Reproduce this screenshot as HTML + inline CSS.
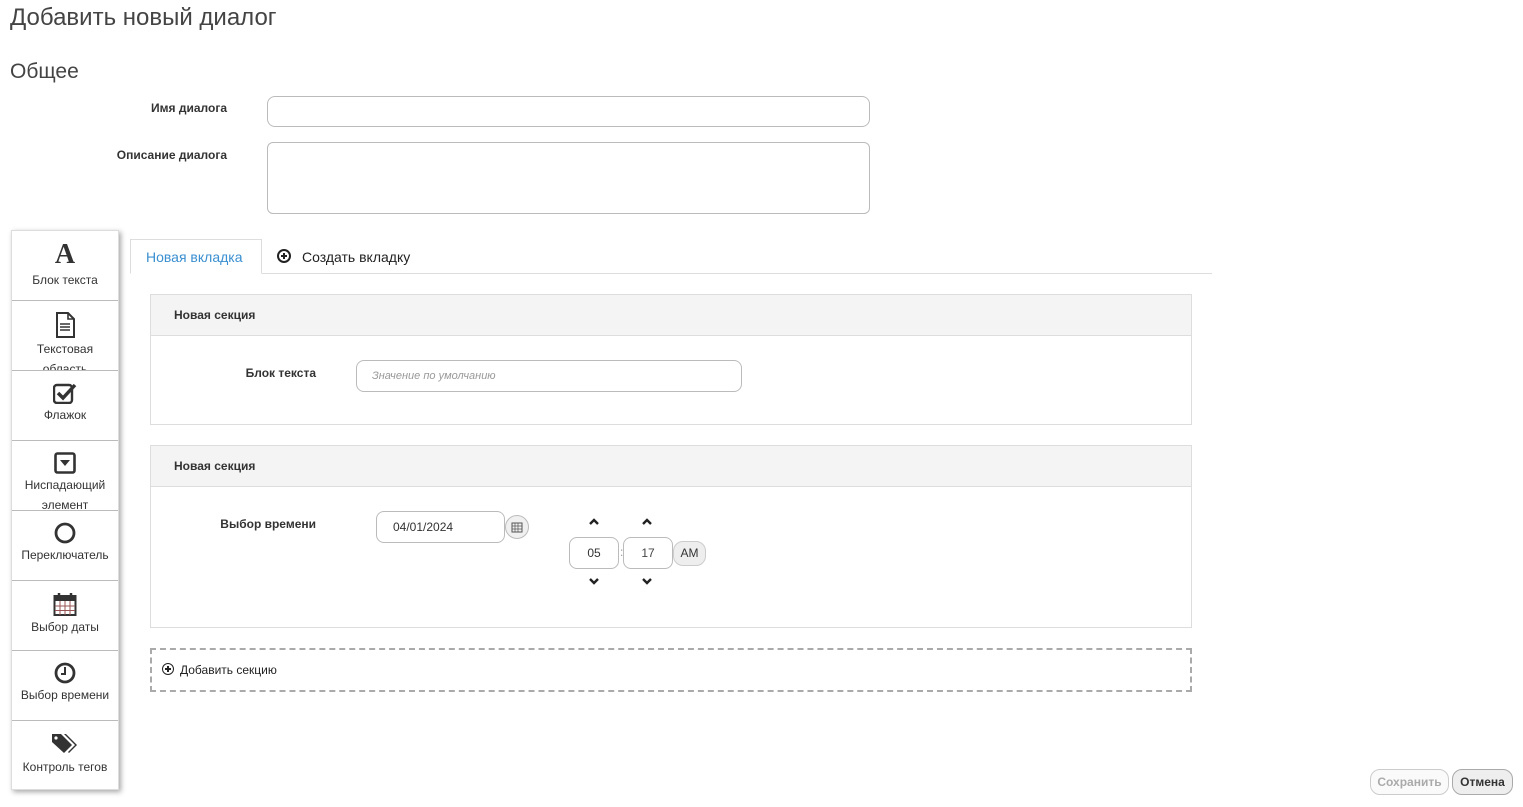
<!DOCTYPE html>
<html><head><meta charset="utf-8"><style>
*{box-sizing:border-box;margin:0;padding:0}
body{width:1523px;height:807px;background:#fff;font-family:"Liberation Sans",sans-serif;color:#333;position:relative;overflow:hidden}
.a{position:absolute}
.lbl{position:absolute;font-size:12px;font-weight:bold;color:#333;text-align:right}
.inp{position:absolute;border:1px solid #bbb;border-radius:8px;background:#fff}
.side{position:absolute;left:11px;top:230px;width:108px;height:560px;background:#fff;box-shadow:2px 2px 5px rgba(0,0,0,.35);border:1px solid #ddd}
.it{height:70px;border-bottom:1px solid #bbb;text-align:center;font-size:12px;line-height:20px;color:#333;overflow:hidden;position:relative}
.it svg{display:block;margin:11px auto 1px}
.sec{position:absolute;left:150px;width:1042px;border:1px solid #ddd}
.sh{height:41px;background:#f4f4f4;border-bottom:1px solid #ddd;font-size:12px;font-weight:bold;padding:13px 0 0 23px}
.btn{position:absolute;border:1px solid #ccc;border-radius:10px;font-size:12px;font-weight:bold;text-align:center;line-height:24px}
.pl{display:inline-block;border:2px solid #222;border-radius:50%;position:relative;vertical-align:-1px}
.pl:before{content:"";position:absolute;left:50%;top:50%;width:6px;height:2px;margin:-1px 0 0 -3px;background:#222}
.pl:after{content:"";position:absolute;left:50%;top:50%;width:2px;height:6px;margin:-3px 0 0 -1px;background:#222}
</style></head><body>
<div class="a" style="left:10px;top:4px;font-size:24px;font-weight:300;color:#444">Добавить новый диалог</div>
<div class="a" style="left:10px;top:60px;font-size:21px;color:#444">Общее</div>
<div class="lbl" style="left:100px;width:127px;top:101px">Имя диалога</div>
<div class="inp" style="left:267px;top:96px;width:603px;height:31px"></div>
<div class="lbl" style="left:60px;width:167px;top:148px">Описание диалога</div>
<div class="inp" style="left:267px;top:142px;width:603px;height:72px;border-radius:6px"></div>

<div class="side">
<div class="it"><div style="font:bold 28px/30px 'Liberation Serif',serif;margin-top:9px;height:30px">A</div>Блок текста</div>
<div class="it"><svg width="20" height="26" viewBox="0 0 20 26"><path d="M2 1h11l6 6v18H2z" fill="none" stroke="#333" stroke-width="2"/><path d="M13 1v6h6M5 12h10M5 15h10M5 18h10" stroke="#333" stroke-width="1.6" fill="none"/></svg>Текстовая<br>область</div>
<div class="it"><svg width="24" height="22" viewBox="0 0 24 22"><rect x="1" y="3" width="18" height="18" rx="3" fill="none" stroke="#333" stroke-width="2.4"/><path d="M5 11l5 5 12-13" fill="none" stroke="#333" stroke-width="3.5"/></svg>Флажок</div>
<div class="it"><svg width="22" height="22" viewBox="0 0 22 22"><rect x="1.5" y="1.5" width="19" height="19" rx="2" fill="none" stroke="#333" stroke-width="2.6"/><path d="M6 8h10l-5 6z" fill="#333"/></svg>Ниспадающий<br>элемент</div>
<div class="it"><svg width="22" height="22" viewBox="0 0 22 22"><circle cx="11" cy="11" r="9" fill="none" stroke="#333" stroke-width="2.8"/></svg>Переключатель</div>
<div class="it"><svg width="24" height="24" viewBox="0 0 24 24"><rect x="1.5" y="4" width="21" height="19" fill="none" stroke="#333" stroke-width="2"/><rect x="1.5" y="4" width="21" height="5" fill="#333"/><path d="M6 1v6M18 1v6" stroke="#333" stroke-width="2.5"/><path d="M7 9v14M12 9v14M17 9v14M2 14h20M2 18.5h20" stroke="#955" stroke-width="1"/></svg>Выбор даты</div>
<div class="it"><svg width="22" height="22" viewBox="0 0 22 22"><circle cx="11" cy="11" r="9" fill="none" stroke="#333" stroke-width="2.8"/><path d="M11 5v7h-4" fill="none" stroke="#333" stroke-width="2"/></svg>Выбор времени</div>
<div class="it" style="border:0"><svg width="28" height="24" viewBox="0 0 28 24"><path d="M1 2h9l11 11-8 8L1 10z" fill="#333"/><circle cx="5" cy="6" r="1.6" fill="#fff"/><path d="M13 2h2l11 11-8 8-1-1 7-7z" fill="#333"/></svg>Контроль тегов</div>
</div>

<div class="a" style="left:130px;top:273px;width:1082px;height:1px;background:#ddd"></div>
<div class="a" style="left:130px;top:239px;width:132px;height:35px;border:1px solid #ddd;border-bottom:1px solid #fff;background:#fff;color:#3a8fd0;font-size:14px;padding:9px 0 0 15px">Новая вкладка</div>
<div class="a" style="left:277px;top:249px;font-size:14px;color:#222"><span class="pl" style="width:14px;height:14px;margin-right:11px"></span>Создать вкладку</div>

<div class="sec" style="top:294px;height:131px"><div class="sh">Новая секция</div></div>
<div class="lbl" style="left:200px;width:116px;top:366px">Блок текста</div>
<div class="inp" style="left:356px;top:360px;width:386px;height:32px;font-size:11px;font-style:italic;color:#999;padding:9px 0 0 15px">Значение по умолчанию</div>

<div class="sec" style="top:445px;height:183px"><div class="sh">Новая секция</div></div>
<div class="lbl" style="left:180px;width:136px;top:517px">Выбор времени</div>
<div class="inp" style="left:376px;top:511px;width:129px;height:32px;font-size:12px;padding:8px 0 0 16px">04/01/2024</div>
<div class="a" style="left:505px;top:515px;width:24px;height:24px;border:1px solid #bbb;border-radius:12px;background:#f0f0f0"><svg width="12" height="12" viewBox="0 0 12 12" style="margin:5px"><rect x="1" y="2" width="10" height="9" fill="none" stroke="#555"/><path d="M1 5h10M4 2v9M7 2v9M1 8h10" stroke="#555" stroke-width=".7"/></svg></div>
<svg class="a" style="left:588px;top:518px" width="12" height="8"><path d="M2 6l4-4 4 4" fill="none" stroke="#222" stroke-width="2.4"/></svg>
<svg class="a" style="left:641px;top:518px" width="12" height="8"><path d="M2 6l4-4 4 4" fill="none" stroke="#222" stroke-width="2.4"/></svg>
<svg class="a" style="left:588px;top:577px" width="12" height="8"><path d="M2 2l4 4 4-4" fill="none" stroke="#222" stroke-width="2.4"/></svg>
<svg class="a" style="left:641px;top:577px" width="12" height="8"><path d="M2 2l4 4 4-4" fill="none" stroke="#222" stroke-width="2.4"/></svg>
<div class="inp" style="left:569px;top:537px;width:50px;height:32px;font-size:12px;text-align:center;line-height:30px">05</div>
<div class="a" style="left:620px;top:545px;font-size:12px;color:#999">:</div>
<div class="inp" style="left:623px;top:537px;width:50px;height:32px;font-size:12px;text-align:center;line-height:30px;color:#444">17</div>
<div class="btn" style="left:673px;top:541px;width:33px;height:25px;background:#eee;font-weight:normal;font-size:12px;color:#333;line-height:22px">AM</div>

<div class="a" style="left:150px;top:648px;width:1042px;height:44px;border:2px dashed #aaa"></div>
<div class="a" style="left:162px;top:663px;font-size:12px;color:#222"><span class="pl" style="width:12px;height:12px;border-width:1.5px;margin-right:6px"></span>Добавить секцию</div>

<div class="btn" style="left:1370px;top:769px;width:79px;height:26px;color:#aaa;background:#fafafa">Сохранить</div>
<div class="btn" style="left:1452px;top:769px;width:61px;height:26px;color:#333;background:#eee;border-color:#aaa">Отмена</div>
</body></html>
